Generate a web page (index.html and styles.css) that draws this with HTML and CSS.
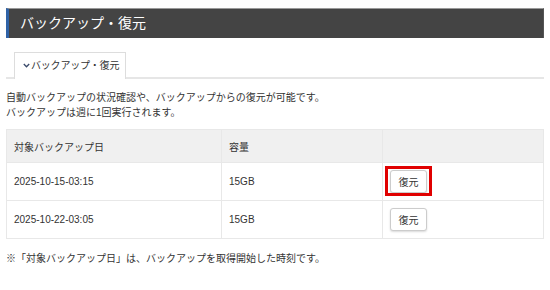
FILE: index.html
```html
<!DOCTYPE html>
<html lang="ja">
<head>
  <meta charset="UTF-8">
  <title>バックアップ・復元</title>
  <link rel="stylesheet" href="styles.css">
</head>
<body>

  <h1 class="page-title">バックアップ・復元</h1>

  <div class="tabs">
    <div class="tab">
      <svg class="chev" width="7" height="5" viewBox="0 0 7 5"><polyline points="0.8,1 3.5,3.8 6.2,1" fill="none" stroke="#3a4a6a" stroke-width="1.3"/></svg>バックアップ・復元
    </div>
  </div>

  <p class="desc">
    自動バックアップの状況確認や、バックアップからの復元が可能です。<br>
    バックアップは週に1回実行されます。
  </p>

  <table class="backup-table">
    <thead>
      <tr>
        <th class="col-date">対象バックアップ日</th>
        <th class="col-size">容量</th>
        <th></th>
      </tr>
    </thead>
    <tbody>
      <tr>
        <td>2025-10-15-03:15</td>
        <td>15GB</td>
        <td><button class="restore marked">復元</button></td>
      </tr>
      <tr>
        <td>2025-10-22-03:05</td>
        <td>15GB</td>
        <td><button class="restore">復元</button></td>
      </tr>
    </tbody>
  </table>

  <p class="note">※「対象バックアップ日」は、バックアップを取得開始した時刻です。</p>

</body>
</html>
```

FILE: styles.css
```css
body {
  margin: 0;
  padding: 8px 6px;
  font-family: "Liberation Sans", "Noto Sans CJK JP", sans-serif;
  font-size: 10px;
  color: #333;
  background: #fff;
}
.page-title {
  margin: 0;
  height: 29px;
  line-height: 29px;
  padding-left: 11px;
  font-size: 14px;
  font-weight: normal;
  color: #fff;
  background: #444;
  border-top: 1px solid #999;
  border-left: 3px solid #2f62a6;
  border-right: 1px solid #555;
}
.tabs {
  margin-top: 14px;
  padding-left: 8px;
  border-bottom: 2px solid #e6e6e6;
  display: flex;
}
.tab {
  height: 25px;
  line-height: 25px;
  padding: 0 6px 1px 8px;
  border: 1px solid #ddd;
  border-bottom: none;
  background: #fff;
  margin-bottom: -2px;
  letter-spacing: -0.2px;
}
.chev {
  margin-right: 1px;
  vertical-align: 1px;
}
.desc {
  margin: 11px 0 0;
  line-height: 15px;
}
.backup-table {
  margin-top: 9px;
  width: 100%;
  border-collapse: collapse;
}
.backup-table th,
.backup-table td {
  border: 1px solid #e8e8e8;
  text-align: left;
  font-weight: normal;
  padding: 0 7px;
}
.backup-table th {
  background: #f0f0f0;
  height: 32px;
}
.backup-table td {
  height: 37px;
}
.col-date {
  width: 200px;
}
.col-size {
  width: 146px;
}
.restore {
  font-family: inherit;
  font-size: 10px;
  color: #333;
  background: #fff;
  border: 1px solid #ccc;
  border-radius: 3px;
  box-shadow: 0 1px 2px rgba(0, 0, 0, 0.15);
  width: 37px;
  height: 23px;
  padding: 0;
  cursor: pointer;
}
.marked {
  position: relative;
}
.marked::after {
  content: "";
  position: absolute;
  top: -5px;
  bottom: -4px;
  left: -6px;
  right: -6px;
  border: 3px solid #e00000;
}
.note {
  margin: 11px 0 0;
}
```
